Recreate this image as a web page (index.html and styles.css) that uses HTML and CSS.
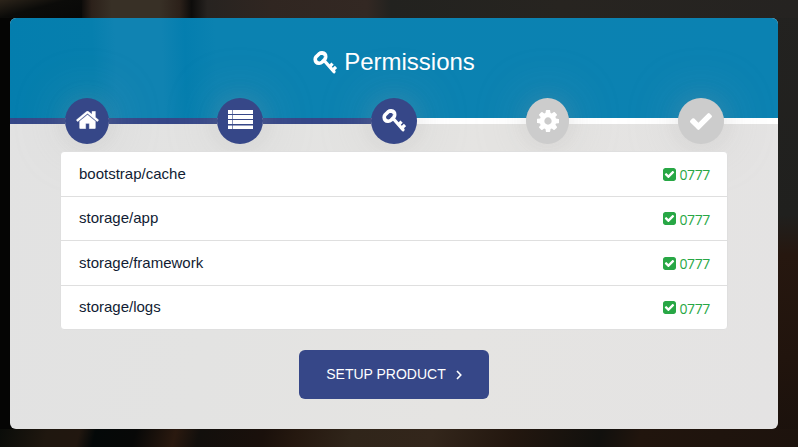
FILE: index.html
```
<!DOCTYPE html>
<html lang="en">
<head>
<meta charset="utf-8">
<title>Permissions</title>
<link rel="stylesheet" href="styles.css">
</head>
<body>
<svg class="defs" aria-hidden="true">
  <symbol id="key" viewBox="0 0 24 24"><g fill="none" stroke="currentColor" stroke-linejoin="round"><path stroke-width="3.6" d="M2.2 8.300Q2.200 7 3.200 5.700L6 2.900Q7.300 1.900 9 1.900Q12.800 2.300 12.700 5.900Q12.600 7.300 11.600 8.500L9.200 11Q7.800 12.300 6 12.200Q2.400 12 2.200 8.300Z"/><path stroke-width="3.300" stroke-linecap="round" d="M12 10.500L21 20.700"/><path stroke-width="3.200" d="M16.200 16L19.600 12.600M19.300 19.500L23 16"/></g></symbol>
  <symbol id="check-square" viewBox="0 128 1536 1536"><path d="M685 1299l614-614q19-19 19-45t-19-45l-102-102q-19-19-45-19t-45 19l-467 467-211-211q-19-19-45-19t-45 19l-102 102q-19 19-19 45t19 45l358 358q19 19 45 19t45-19zm851-883v960q0 119-84.500 203.500t-203.500 84.500h-960q-119 0-203.500-84.500t-84.500-203.500v-960q0-119 84.500-203.500t203.500-84.500h960q119 0 203.500 84.500t84.500 203.500z"/></symbol>
</svg>
<main class="card">
  <header class="header">
    <h1 class="title"><svg class="title-icon"><use href="#key"/></svg>Permissions</h1>
  </header>
  <nav class="steps">
    <span class="line done lead"></span>
    <span class="step done narrow"><svg class="home" viewBox="0 256 1664 1280"><path d="M1408 992v480q0 26-19 45t-45 19h-384v-384h-256v384h-384q-26 0-45-19t-19-45v-480q0-1 .5-3t.5-3l575-474 575 474q1 2 1 6zm223-69l-62 74q-8 9-21 11h-3q-13 0-21-7l-692-577-692 577q-12 8-24 7-13-2-21-11l-62-74q-8-10-7-23.500t11-21.500l719-599q32-26 76-26t76 26l244 204v-195q0-14 9-23t23-9h192q14 0 23 9t9 23v408l219 182q10 8 11 21.500t-7 23.500z"/></svg></span>
    <span class="line done"></span>
    <span class="step done"><svg class="list" viewBox="0 0 25 19"><path d="M0 0h4v4H0zM4.600 0H25v4H4.600zM0 5h4v4H0zM4.600 5H25v4H4.600zM0 10h4v4H0zM4.600 10H25v4H4.600zM0 15.500h4V19H0zM4.600 15.500H25V19H4.600z"/></svg></span>
    <span class="line done"></span>
    <span class="step done"><svg class="key"><use href="#key"/></svg></span>
    <span class="line"></span>
    <span class="step slim"><svg class="cog" viewBox="0 128 1536 1536"><path d="M1024 896q0-106-75-181t-181-75-181 75-75 181 75 181 181 75 181-75 75-181zm512-109v222q0 12-8 23t-20 13l-185 28q-19 54-39 91 35 50 107 138 10 12 10 25t-9 23q-27 37-99 108t-94 71q-12 0-26-9l-138-108q-44 23-91 38-16 136-29 186-7 28-36 28h-222q-14 0-24.500-8.500t-11.500-21.500l-28-184q-49-16-90-37l-141 107q-10 9-25 9-14 0-25-11-126-114-165-168-7-10-7-23 0-12 8-23 15-21 51-66.500t54-70.500q-27-50-41-99l-183-27q-13-2-21-12.500t-8-23.500v-222q0-12 8-23t19-13l186-28q14-46 39-92-40-57-107-138-10-12-10-24 0-10 9-23 26-36 98.500-107.500t94.500-71.500q13 0 26 10l138 107q44-23 91-38 16-136 29-186 7-28 36-28h222q14 0 24.500 8.500t11.500 21.500l28 184q49 16 90 37l142-107q9-9 24-9 13 0 25 10 129 119 165 170 7 8 7 22 0 12-8 23-15 21-51 66.500t-54 70.500q26 50 41 98l183 28q13 2 21 12.500t8 23.500z"/></svg></span>
    <span class="line"></span>
    <span class="step"><svg class="check" viewBox="121 334 1550 1188"><path d="M1671 566q0 40-28 68l-724 724-136 136q-28 28-68 28t-68-28l-136-136-362-362q-28-28-28-68t28-68l136-136q28-28 68-28t68 28l294 295 656-657q28-28 68-28t68 28l136 136q28 28 28 68z"/></svg></span>
    <span class="line tail"></span>
  </nav>
  <section class="content">
    <ul class="permissions">
      <li>bootstrap/cache<span class="mode"><svg><use href="#check-square"/></svg>0777</span></li>
      <li>storage/app<span class="mode"><svg><use href="#check-square"/></svg>0777</span></li>
      <li>storage/framework<span class="mode"><svg><use href="#check-square"/></svg>0777</span></li>
      <li>storage/logs<span class="mode"><svg><use href="#check-square"/></svg>0777</span></li>
    </ul>
    <a class="button">SETUP PRODUCT<svg viewBox="0 0 6 10"><path d="M1 1L4.800 5L1 9"/></svg></a>
  </section>
</main>
</body>
</html>
```
FILE: styles.css
```
* { box-sizing: border-box; }
body {
  margin: 0;
  width: 798px;
  height: 447px;
  overflow: hidden;
  padding: 18px 20px 18px 10px;
  font-family: "Liberation Sans", Arial, sans-serif;
  background:
    linear-gradient(105deg, #0a0c09 0, #1f170f 6%, #21170f 10%, #040808 12%, #070807 17%, #2a190f 22%, #120f0c 25%, #1a100b 33%, #25180f 37%, #30251a 44%, #33261b 54%, #23170f 64%, #11100d 75%, #21150d 80%, #1d130d 100%) 0 100% / 100% 18px no-repeat,
    linear-gradient(165deg, #2c241a 0, #0b0b09 45%, #080807 100%) 0 0 / 82px 18px no-repeat,
    linear-gradient(90deg, #080807 0, #080807 10%, #2c211a 11.500%, #383026 14%, #383026 20%, #2c211a 22.500%, #0d0c0b 24%, #272320 26%, #302621 34%, #332823 46%, #22221f 49%, #272420 70%, #252321 100%) 0 0 / 100% 18px no-repeat,
    linear-gradient(180deg, #232220 0, #20201e 48%, #26170f 57%, #21140d 80%, #1a110c 100%) 100% 0 / 30px 100% no-repeat,
    #050504;
}
.defs { display: none; }
svg { display: block; fill: currentColor; }
.card {
  height: 411px;
  border-radius: 6px;
  overflow: hidden;
  background: linear-gradient(100deg, #e2e2e2 0, #e3e3e2 30%, #e5e4e2 60%, #e4e3e3 100%);
}
.header {
  height: 100px;
  padding-top: 28px;
  background: linear-gradient(88deg, #047eae 0, #067fae 11%, #1083b2 14%, #1083b2 20%, #047eaf 23%, #0b82b1 27%, #0b82b2 100%);
}
.title {
  display: flex;
  justify-content: center;
  align-items: center;
  gap: 7px;
  margin: 0;
  height: 32px;
  font-size: 24px;
  font-weight: 400;
  color: #fff;
}
.title-icon { width: 24px; height: 24px; margin-top: 1px; }
.steps {
  display: flex;
  align-items: center;
  height: 46px;
  margin-top: -20px;
}
.line { flex: none; width: 108px; height: 6px; background: #fff; }
.line.done { background: #364788; }
.line.lead { width: 55px; }
.line.tail { width: 54px; }
.line:nth-child(7), .line:nth-child(9) { width: 109px; }
.step {
  flex: none;
  position: relative;
  z-index: 1;
  display: flex;
  align-items: center;
  justify-content: center;
  width: 46px;
  height: 46px;
  border-radius: 50%;
  background: #ccc;
  color: #fff;
  box-shadow: 0 0 55px rgba(180, 180, 180, .3), 0 0 22px rgba(150, 150, 150, .16);
}
.step.done { background: #364788; }
.step.narrow { width: 44px; }
.step.slim { width: 43px; }
.home { width: 23px; height: 18px; margin-bottom: 2px; stroke: #fff; stroke-width: 20; }
.list { width: 25px; height: 19px; margin-bottom: 3px; }
.key { width: 24px; height: 24px; }
.cog { width: 22px; height: 22px; margin-bottom: 1px; }
.check { width: 22px; height: 17px; }
.content {
  display: flex;
  flex-direction: column;
  align-items: center;
  gap: 20px;
  padding-top: 7px;
}
.permissions {
  width: 668px;
  height: 179px;
  display: grid;
  grid-template-rows: 45px 44px 45px 43px;
  margin: 0;
  padding: 0;
  list-style: none;
  background: #fff;
  border: 1px solid #dfdfdf;
  border-radius: 4px;
  position: relative;
  z-index: 2;
}
.permissions li {
  display: flex;
  align-items: center;
  justify-content: space-between;
  padding: 0 17px 2px 18px;
  border-bottom: 1px solid #dfdfdf;
  font-size: 15px;
  color: #111c33;
}
.permissions li:last-child { border-bottom: 0; }
.mode {
  display: flex;
  align-items: center;
  gap: 3px;
  padding-top: 3px;
  font: 14px "Open Sans", sans-serif;
  letter-spacing: -.35px;
  color: #28a745;
}
.mode svg { width: 13px; height: 13px; margin-top: -1px; }
.button {
  display: flex;
  align-items: center;
  justify-content: center;
  gap: 10px;
  width: 190px;
  height: 49px;
  padding-bottom: 2px;
  border-radius: 6px;
  background: #364788;
  color: #fff;
  font-size: 14px;
}
.button svg {
  width: 6px;
  height: 10px;
  margin-top: 3px;
  fill: none;
  stroke: #fff;
  stroke-width: 1.600;
}
```
